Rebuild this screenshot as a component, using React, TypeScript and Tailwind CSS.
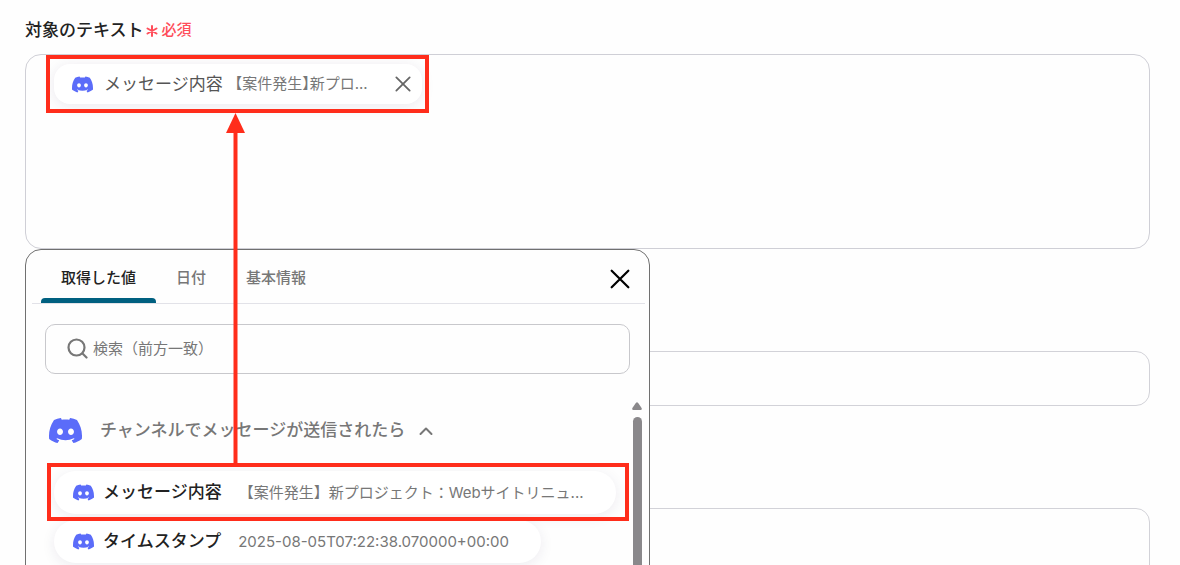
import React, { useState } from 'react';
import { SiDiscord } from 'react-icons/si';

interface OutputValue {
  id: string;
  name: string;
  value: string;
}

const tabs = [
  { id: 'values', label: '取得した値' },
  { id: 'date', label: '日付' },
  { id: 'basic', label: '基本情報' }
];

const outputs: OutputValue[] = [
  { id: 'content', name: 'メッセージ内容', value: '【案件発生】新プロジェクト：Webサイトリニュ...' },
  { id: 'timestamp', name: 'タイムスタンプ', value: '2025-08-05T07:22:38.070000+00:00' }
];

const CloseIcon: React.FC<{ className: string; strokeWidth: number }> = ({ className, strokeWidth }) => (
  <svg viewBox="0 0 18 18" className={className} fill="none" stroke="currentColor" strokeWidth={strokeWidth} strokeLinecap="round" aria-hidden="true">
    <path d="M1.5 1.5l15 15M16.5 1.5l-15 15" />
  </svg>
);

const SelectedChip: React.FC = () => (
  <div className="flex h-10 w-[368px] items-center rounded-2xl bg-white pr-[11px] pl-[18px] shadow-[0_2px_14px_rgba(40,20,80,0.09)]">
    <SiDiscord className="h-[21px] w-[21px] shrink-0 text-[#5b6cf9]" />
    <span className="ml-[11px] pt-px text-[17px] text-[#555]">メッセージ内容</span>
    <span className="ml-3 text-[15px] text-[#777] [font-feature-settings:'halt']">【案件発生】新プロ...</span>
    <button type="button" aria-label="削除" className="ml-auto text-[#666]">
      <CloseIcon className="h-4 w-4" strokeWidth={2} />
    </button>
  </div>
);

const ValuePicker: React.FC = () => {
  const [activeTab, setActiveTab] = useState('values');
  const [open, setOpen] = useState(true);

  return (
    <div className="absolute top-full left-0 z-10 h-[400px] w-[625px] overflow-hidden rounded-[16px] border border-[#707070] bg-[#fefefe]">
      <div className="mr-1 ml-[6px] flex h-[54px] items-stretch border-b border-[#e2e2e8] pr-[15px] pl-[9px]">
        <div role="tablist" className="flex">
          {tabs.map((tab) => (
            <button
              key={tab.id}
              type="button"
              role="tab"
              aria-selected={activeTab === tab.id}
              onClick={() => setActiveTab(tab.id)}
              className={`relative px-5 pt-[3px] text-[15px] font-medium ${
                activeTab === tab.id ? 'text-[#222]' : 'text-[#777]'
              }`}
            >
              {tab.label}
              {activeTab === tab.id && (
                <span className="absolute inset-x-0 bottom-0 h-[5px] rounded-t bg-[#006080]" />
              )}
            </button>
          ))}
        </div>
        <button type="button" aria-label="閉じる" className="mt-[5px] ml-auto text-black">
          <CloseIcon className="h-5 w-5" strokeWidth={2} />
        </button>
      </div>

      <label className="mx-[19px] mt-5 flex h-[50px] items-center rounded-[10px] border border-[#c8c8cc] px-5">
        <svg viewBox="0 0 22 22" className="h-[22px] w-[22px] shrink-0 text-[#777]" fill="none" stroke="currentColor" strokeWidth="2.2" strokeLinecap="round" aria-hidden="true">
          <circle cx="10.500" cy="9.500" r="8" />
          <path d="M16.5 15.500l4 4" />
        </svg>
        <input
          type="search"
          aria-label="検索"
          placeholder="検索（前方一致）"
          className="ml-[5px] min-w-0 flex-1 bg-transparent pt-px text-[15px] outline-none placeholder:text-[#777]"
        />
      </label>

      <div className="flex pt-7 pr-[7px]">
        <div className="min-w-0 flex-1 pl-[22px]">
          <button
            type="button"
            aria-expanded={open}
            onClick={() => setOpen(!open)}
            className="flex h-14 items-center pl-px text-[17px] font-medium text-[#777]"
          >
            <SiDiscord className="h-[33px] w-[33px] text-[#5b6cf9]" />
            <span className="ml-[18px] pt-px">チャンネルでメッセージが送信されたら</span>
            <svg viewBox="0 0 14 10" className="mt-[2px] ml-[14px] h-[10px] w-[14px]" fill="none" stroke="currentColor" strokeWidth="2" strokeLinecap="round" strokeLinejoin="round" aria-hidden="true">
              <path d="M1.5 8L7 2.5 12.500 8" />
            </svg>
          </button>
          {open && (
            <ul className="mt-[13px] ml-[6px] flex flex-col items-start gap-[6px]">
              {outputs.map((output) => (
                <li key={output.id} className="max-w-full">
                  <button
                    type="button"
                    className="flex h-[43px] items-center rounded-[22px] bg-white pr-8 pl-[19px] whitespace-nowrap shadow-[0_3px_14px_rgba(40,20,80,0.08)]"
                  >
                    <SiDiscord className="h-[21px] w-[21px] text-[#5b6cf9]" />
                    <span className="ml-[9px] pt-px text-[17px] font-medium text-[#222]">{output.name}</span>
                    <span className="ml-[17px] pt-px text-[15px] text-[#777]">{output.value}</span>
                  </button>
                </li>
              ))}
            </ul>
          )}
        </div>
        <div className="flex w-[10px] shrink-0 flex-col items-center" aria-hidden="true">
          <svg viewBox="0 0 10 8" className="h-2 w-[10px] text-[#8a888b]" fill="currentColor">
            <path d="M4 .8Q5-.4 6 .8L9.600 6Q10.200 8 8.800 8H1.200Q-.2 8 .4 6z" />
          </svg>
          <div className="mt-[7px] h-[200px] w-[9px] rounded-full bg-[#8a888b]" />
        </div>
      </div>
    </div>
  );
};

// Tutorial highlight: selected value -> inserted chip
const Callouts: React.FC = () => (
  <div className="pointer-events-none absolute inset-0 z-20" aria-hidden="true">
    <div className="absolute top-[55px] left-[46px] h-[58px] w-[383px] border-4 border-[#ff2d1b]" />
    <svg viewBox="0 0 20 352" className="absolute top-[113px] left-[225px] h-[352px] w-5">
      <path d="M10.500 16V352" stroke="#ff2d1b" strokeWidth="4" />
      <path d="M10.500 0L20 20H1z" fill="#ff2d1b" />
    </svg>
    <div className="absolute top-[463px] left-[47px] h-[58px] w-[582px] border-4 border-[#ff2d1b]" />
  </div>
);

const App: React.FC = () => {
  return (
    <main className="relative h-screen overflow-hidden bg-[#fefefe] pt-4 pr-[30px] pl-[25px] font-['Inter','Noto_Sans_CJK_JP',sans-serif]">
      <div className="flex h-7 items-center">
        <span id="target-label" className="pt-px text-[17px] font-medium text-[#222]">対象のテキスト</span>
        <svg viewBox="0 0 12 12" className="mt-[2px] ml-[2px] h-3 w-3" stroke="#ff4d5a" strokeWidth="2" strokeLinecap="round" aria-hidden="true">
          <path d="M6 1v10M1.500 3.500l9 5M10.500 3.500l-9 5" />
        </svg>
        <span className="ml-1 text-[15px] font-medium text-[#ff4d5a]">必須</span>
      </div>

      <div className="relative mt-[10px]">
        <div
          role="textbox"
          aria-labelledby="target-label"
          aria-multiline="true"
          className="h-[195px] rounded-[16px] border border-[#cfcfd6] px-7 pt-[9px]"
        >
          <SelectedChip />
        </div>
        <ValuePicker />
      </div>

      <input aria-label="項目" className="mt-[102px] block h-[55px] w-full rounded-[14px] border border-[#d2d2d8] px-4" />
      <textarea aria-label="詳細" className="mt-[102px] block h-[195px] w-full resize-none rounded-[14px] border border-[#d2d2d8] p-4" />

      <Callouts />
    </main>
  );
};

export default App;
